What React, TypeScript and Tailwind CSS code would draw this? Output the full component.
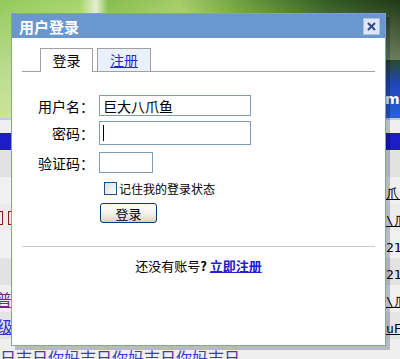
import React from 'react';

type Row = {
  bg: string;
  left?: React.ReactNode;
  right?: string;
  underline?: boolean;
};

const rows: Row[] = [
  { bg: 'bg-[#e2e2e2]' },
  { bg: 'bg-[#f0f0f0]', right: '爪(', underline: true },
  {
    bg: 'bg-[#ececec]',
    left: (
      <div className="flex gap-[5px]">
        <span className="-ml-[3px] h-[14px] w-[6px] border border-[#8b1a1a]" />
        <span className="h-[14px] w-[6px] border border-[#8b1a1a]" />
      </div>
    ),
    right: '\\爪',
    underline: true,
  },
  { bg: 'bg-[#f0f0f0]', right: '21.' },
  { bg: 'bg-[#e2e2e2]', right: '21.' },
  {
    bg: 'bg-[#f0f0f0]',
    left: <span className="-ml-[4px] text-[16px] text-[#7a1f8c] underline">普通</span>,
    right: '\\爪',
    underline: true,
  },
  {
    bg: 'bg-[#e4e4e4]',
    left: <span className="-ml-[3px] text-[16px] text-[#3030d0] underline">级别</span>,
    right: 'uFl',
    underline: true,
  },
];

function Banner() {
  return (
    <svg width="400" height="118" viewBox="0 0 400 118" className="block">
      <defs>
        <linearGradient id="leaf" x1="0" x2="1" y1="0" y2="0">
          <stop offset="0" stopColor="#92c95a" />
          <stop offset="0.2" stopColor="#a6d46c" />
          <stop offset="0.24" stopColor="#e2f0cf" />
          <stop offset="0.27" stopColor="#86bd4d" />
          <stop offset="0.45" stopColor="#a4cc66" />
          <stop offset="0.6" stopColor="#6e9f3e" />
          <stop offset="0.82" stopColor="#335c22" />
          <stop offset="1" stopColor="#1f3816" />
        </linearGradient>
        <linearGradient id="fade" x1="0" x2="0" y1="0" y2="1">
          <stop offset="0" stopColor="#ffffff" stopOpacity="0" />
          <stop offset="1" stopColor="#e4efb0" stopOpacity="0.7" />
        </linearGradient>
        <linearGradient id="sky" x1="0" x2="0" y1="0" y2="1">
          <stop offset="0" stopColor="#2a4a2a" />
          <stop offset="0.4" stopColor="#1e46b8" />
          <stop offset="1" stopColor="#2a62d8" />
        </linearGradient>
      </defs>
      <rect width="400" height="118" fill="url(#leaf)" />
      <rect width="400" height="118" fill="url(#fade)" />
      <rect x="380" y="60" width="20" height="58" fill="url(#sky)" />
      <text x="385" y="104" fill="#ffffff" fontSize="14" fontWeight="bold" fontFamily="DejaVu Sans, sans-serif">
        ma
      </text>
    </svg>
  );
}

function Field({ label, children, className = '' }: { label: string; children: React.ReactNode; className?: string }) {
  return (
    <div className={`flex items-center ${className}`}>
      <span className="w-[72px] text-right text-[14px] leading-none text-black">{label}</span>
      <div className="ml-[5px]">{children}</div>
    </div>
  );
}

export default function App() {
  return (
    <div className="relative h-[359px] w-[400px] overflow-hidden bg-[#efefef] font-['Noto_Sans_CJK_SC',sans-serif]">
      {/* page behind the dialog */}
      <div className="flex flex-col">
        <Banner />
        <div className="h-[2px] bg-[#c4cbe8]" />
        <div className="h-[13px] bg-[#efefef]" />
        <div className="h-[17px] bg-[#1c1cc8]" />
        {rows.map((r, i) => (
          <div key={i} className={`grid h-[27px] grid-cols-[386px_14px] items-center ${r.bg}`}>
            <div className="flex items-center overflow-hidden whitespace-nowrap">{r.left}</div>
            <div className="overflow-hidden whitespace-nowrap">
              <span
                className={`font-['DejaVu_Sans_Mono',monospace] text-[13px] leading-none text-black ${
                  r.underline ? 'underline' : ''
                }`}
              >
                {r.right}
              </span>
            </div>
          </div>
        ))}
        <div className="h-[20px] overflow-hidden whitespace-nowrap bg-[#efefef] pt-[10px] text-[16px] leading-none text-[#3b3bd0]">
          日志日你妈志日你妈志日你妈志日
        </div>
      </div>

      {/* login dialog */}
      <div className="absolute left-[11px] top-[13px] flex h-[333px] w-[375px] flex-col border border-[#7c9fd4] bg-white shadow-[4px_4px_0_rgba(0,0,0,0.22)]">
        <div className="flex h-[24px] items-center justify-between bg-[#6a97cd] pl-[7px] pr-[5px]">
          <span className="text-[15px] font-bold leading-none text-white">用户登录</span>
          <button className="flex h-[17px] w-[17px] items-center justify-center border border-[#a9c0e2] bg-[#dde6f4]">
            <svg width="9" height="9" viewBox="0 0 9 9">
              <path d="M1 1 L8 8 M8 1 L1 8" stroke="#2c4a7c" strokeWidth="2" />
            </svg>
          </button>
        </div>

        <div className="flex flex-col px-[10px] pt-[10px]">
          <div className="flex gap-[4px] border-b border-[#a0a0a0] pl-[18px]">
            <div className="-mb-px flex h-[24px] w-[53px] items-center justify-center border border-b-0 border-[#a0a0a0] bg-white text-[14px] text-black">
              登录
            </div>
            <div className="flex h-[23px] w-[54px] items-center justify-center border border-b-0 border-[#a0a0a0] bg-[#e8f0fc] text-[14px] text-[#2424d8] underline">
              注册
            </div>
          </div>

          <div className="flex flex-col">
            <Field label="用户名：" className="mt-[23px]">
              <div className="flex h-[21px] w-[152px] items-center border border-[#7f9db9] px-[3px] text-[14px] leading-none text-black">
                巨大八爪鱼
              </div>
            </Field>
            <Field label="密码：" className="mt-[5px]">
              <div className="flex h-[24px] w-[152px] items-center border border-[#7f9db9] px-[3px]">
                <span className="h-[16px] w-px bg-black" />
              </div>
            </Field>
            <Field label="验证码：" className="mt-[7px]">
              <div className="h-[21px] w-[54px] border border-[#7f9db9]" />
            </Field>

            <div className="ml-[82px] mt-[9px] flex items-center gap-[2px]">
              <span className="h-[13px] w-[13px] border border-[#1c5180] bg-gradient-to-br from-[#dcdcd7] to-white" />
              <span className="text-[12px] leading-none text-black">记住我的登录状态</span>
            </div>

            <div className="ml-[78px] mt-[8px]">
              <button className="flex h-[20px] w-[57px] items-center justify-center rounded-[3px] border border-[#003c74] bg-gradient-to-b from-white via-[#f4f3ee] to-[#d8d4c4] text-[13px] leading-none text-black">
                登录
              </button>
            </div>
          </div>

          <div className="mt-[23px] h-px bg-[#cccccc]" />

          <div className="mt-[10px] text-center text-[13px] leading-[18px] text-black">
            还没有账号<span className="font-bold">?</span>{' '}
            <span className="font-bold text-[#2020d0] underline">立即注册</span>
          </div>
        </div>
      </div>
    </div>
  );
}
